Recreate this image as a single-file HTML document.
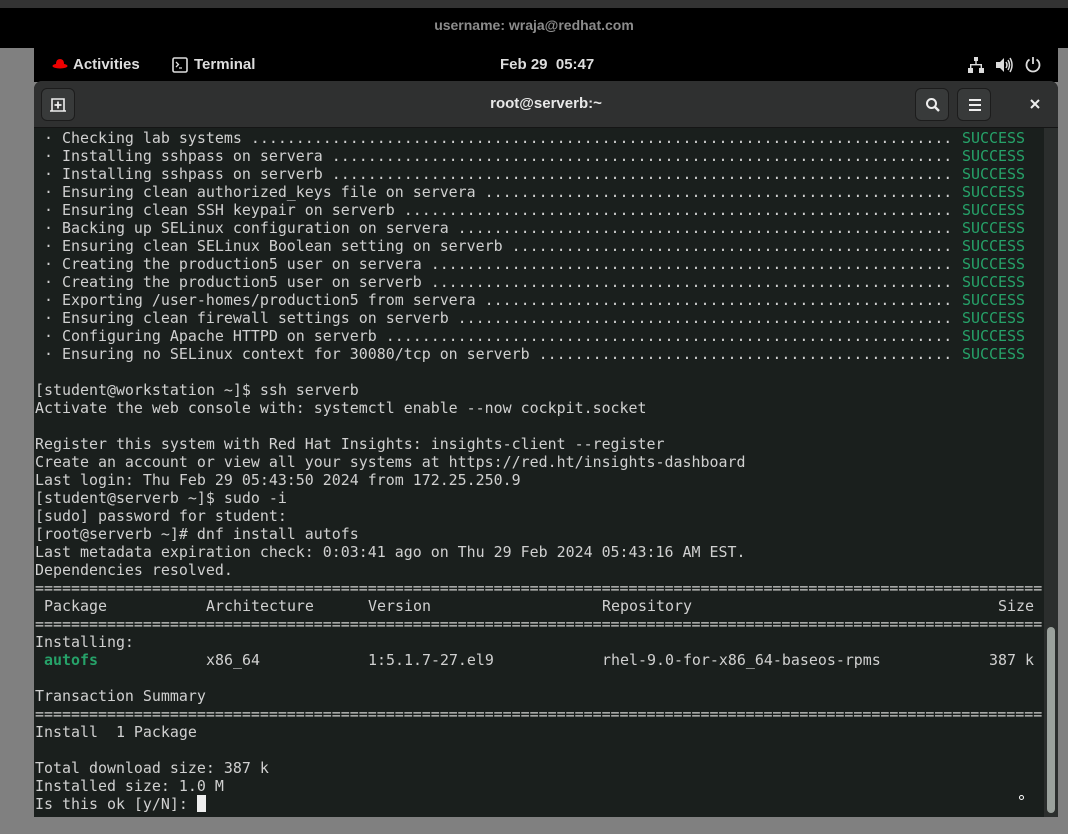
<!DOCTYPE html>
<html><head><meta charset="utf-8"><style>
*{margin:0;padding:0;box-sizing:border-box}
body{width:1068px;height:834px;overflow:hidden;background:#808080;position:relative;font-family:"Liberation Sans",sans-serif}
#top{position:absolute;left:0;top:0;width:1068px;height:48px;background:#000;border-top:8px solid #333}
#top span{position:absolute;left:0;right:0;top:9px;text-align:center;color:#8c8c8c;font-size:14px;font-weight:bold}
#bar{position:absolute;left:34px;top:48px;width:1024px;height:34px;background:#000;color:#ddd;font-size:15px;font-weight:bold}
#win{position:absolute;left:34px;top:81px;width:1024px;height:736px;background:#1a1f1d;border-radius:8px 8px 0 0;overflow:hidden}
#hdr{position:absolute;left:0;top:0;width:1024px;height:47px;background:#2f3030;border-bottom:1px solid #151515}
.btn{position:absolute;top:7px;height:33px;background:#383a3a;border:1px solid #1c1c1c;border-radius:6px}
#term{position:absolute;left:1px;top:48px;font-family:"DejaVu Sans Mono","Liberation Mono",monospace;font-size:14.95px;color:#d0d0d0}
.l{position:relative;height:18px;line-height:18px;white-space:pre}
.d{position:absolute;left:0;top:0;width:918px;overflow:hidden}
.s{position:absolute;left:927px;top:0;color:#26a269}
.a{position:absolute;top:0}
.g{color:#26a269;font-weight:bold}
#sb{position:absolute;left:1010px;top:47px;width:14px;height:689px;background:#2b2e2d}
#th{position:absolute;left:1013px;top:546px;width:8px;height:186px;background:#9aa19c;border-radius:4px}
</style></head><body>
<div id="top"><span>username: wraja@redhat.com</span></div>
<div id="bar">
<svg style="position:absolute;left:18px;top:10px" width="16" height="12" viewBox="0 0 16 12"><path d="M4 6 Q4 1 8 1 Q12 1 12 6 Z" fill="#e00"/><ellipse cx="8" cy="8" rx="7.5" ry="2.5" fill="#e00"/></svg>
<span style="position:absolute;left:39px;top:8px">Activities</span>
<svg style="position:absolute;left:138px;top:9px" width="16" height="16" viewBox="0 0 16 16"><rect x="1" y="1" width="14" height="14" rx="1.5" fill="none" stroke="#ddd" stroke-width="1.6"/><path d="M4 5 L6.5 7.5 L4 10 M7 11 H10" fill="none" stroke="#ddd" stroke-width="1.3"/></svg>
<span style="position:absolute;left:160px;top:8px">Terminal</span>
<span style="position:absolute;left:466px;top:8px">Feb 29&nbsp;&nbsp;05:47</span>
<svg style="position:absolute;left:934px;top:9px" width="16" height="16" viewBox="0 0 16 16" fill="#ddd"><rect x="6" y="0" width="4" height="4"/><rect x="7.3" y="4" width="1.4" height="4"/><rect x="2" y="7" width="12" height="1.4"/><rect x="2" y="7" width="1.4" height="4"/><rect x="12.6" y="7" width="1.4" height="4"/><rect x="0" y="11" width="5" height="5"/><rect x="11" y="11" width="5" height="5"/></svg>
<svg style="position:absolute;left:962px;top:9px" width="17" height="16" viewBox="0 0 17 16"><path d="M0 5 H4 L8 1 V15 L4 11 H0Z" fill="#ddd"/><path d="M10 5 Q12 8 10 11 M12 3 Q15 8 12 13 M14 1 Q18 8 14 15" fill="none" stroke="#ddd" stroke-width="1.5"/></svg>
<svg style="position:absolute;left:991px;top:8px" width="16" height="17" viewBox="0 0 16 17"><path d="M4.5 3.5 A6.5 6.5 0 1 0 11.5 3.5" fill="none" stroke="#ddd" stroke-width="1.8"/><path d="M8 1 V8" stroke="#ddd" stroke-width="1.8"/></svg>
</div>
<div id="win">
<div id="hdr">
<div class="btn" style="left:7px;width:34px"><svg style="position:absolute;left:8px;top:8px" width="16" height="15" viewBox="0 0 16 15"><path d="M2 14 V2 H14 V14 M0 14 H16" fill="none" stroke="#eee" stroke-width="1.6"/><path d="M8 4.5 V11.5 M4.5 8 H11.5" stroke="#eee" stroke-width="1.8"/></svg></div>
<div style="position:absolute;left:0;right:0;top:14px;text-align:center;color:#e8e8e8;font-size:15px;font-weight:bold">root@serverb:~</div>
<div class="btn" style="left:881px;width:34px"><svg style="position:absolute;left:9px;top:8px" width="16" height="16" viewBox="0 0 16 16"><circle cx="6.5" cy="6.5" r="4.5" fill="none" stroke="#eee" stroke-width="2"/><path d="M10 10 L14 14" stroke="#eee" stroke-width="2.4"/></svg></div>
<div class="btn" style="left:923px;width:34px"><svg style="position:absolute;left:11px;top:10px" width="12" height="12" viewBox="0 0 12 12" fill="#eee"><rect y="0" width="12" height="2"/><rect y="5" width="12" height="2"/><rect y="10" width="12" height="2"/></svg></div>
<svg style="position:absolute;left:996px;top:18px" width="10" height="10" viewBox="0 0 10 10"><path d="M1 1 L9 9 M9 1 L1 9" stroke="#eee" stroke-width="2"/></svg>
</div>
<div id="term">
<div class="l"><span class="d"> · Checking lab systems ..........................................................................................................</span><span class="s">SUCCESS</span></div>
<div class="l"><span class="d"> · Installing sshpass on servera ..................................................................................................</span><span class="s">SUCCESS</span></div>
<div class="l"><span class="d"> · Installing sshpass on serverb ..................................................................................................</span><span class="s">SUCCESS</span></div>
<div class="l"><span class="d"> · Ensuring clean authorized_keys file on servera .................................................................................</span><span class="s">SUCCESS</span></div>
<div class="l"><span class="d"> · Ensuring clean SSH keypair on serverb ..........................................................................................</span><span class="s">SUCCESS</span></div>
<div class="l"><span class="d"> · Backing up SELinux configuration on servera ....................................................................................</span><span class="s">SUCCESS</span></div>
<div class="l"><span class="d"> · Ensuring clean SELinux Boolean setting on serverb ..............................................................................</span><span class="s">SUCCESS</span></div>
<div class="l"><span class="d"> · Creating the production5 user on servera .......................................................................................</span><span class="s">SUCCESS</span></div>
<div class="l"><span class="d"> · Creating the production5 user on serverb .......................................................................................</span><span class="s">SUCCESS</span></div>
<div class="l"><span class="d"> · Exporting /user-homes/production5 from servera .................................................................................</span><span class="s">SUCCESS</span></div>
<div class="l"><span class="d"> · Ensuring clean firewall settings on serverb .....................................................................................</span><span class="s">SUCCESS</span></div>
<div class="l"><span class="d"> · Configuring Apache HTTPD on serverb .............................................................................................</span><span class="s">SUCCESS</span></div>
<div class="l"><span class="d"> · Ensuring no SELinux context for 30080/tcp on serverb ...........................................................................</span><span class="s">SUCCESS</span></div>
<div class="l"> </div>
<div class="l">[student@workstation ~]$ ssh serverb</div>
<div class="l">Activate the web console with: systemctl enable --now cockpit.socket</div>
<div class="l"> </div>
<div class="l">Register this system with Red Hat Insights: insights-client --register</div>
<div class="l">Create an account or view all your systems at https://red.ht/insights-dashboard</div>
<div class="l">Last login: Thu Feb 29 05:43:50 2024 from 172.25.250.9</div>
<div class="l">[student@serverb ~]$ sudo -i</div>
<div class="l">[sudo] password for student:</div>
<div class="l">[root@serverb ~]# dnf install autofs</div>
<div class="l">Last metadata expiration check: 0:03:41 ago on Thu 29 Feb 2024 05:43:16 AM EST.</div>
<div class="l">Dependencies resolved.</div>
<div class="l">================================================================================================================</div>
<div class="l"><span class="a" style="left:9px">Package</span><span class="a" style="left:171px">Architecture</span><span class="a" style="left:333px">Version</span><span class="a" style="left:567px">Repository</span><span class="a" style="left:963px">Size</span></div>
<div class="l">================================================================================================================</div>
<div class="l">Installing:</div>
<div class="l"><span class="a g" style="left:9px">autofs</span><span class="a" style="left:171px">x86_64</span><span class="a" style="left:333px">1:5.1.7-27.el9</span><span class="a" style="left:567px">rhel-9.0-for-x86_64-baseos-rpms</span><span class="a" style="left:954px">387 k</span></div>
<div class="l"> </div>
<div class="l">Transaction Summary</div>
<div class="l">================================================================================================================</div>
<div class="l">Install  1 Package</div>
<div class="l"> </div>
<div class="l">Total download size: 387 k</div>
<div class="l">Installed size: 1.0 M</div>
<div class="l">Is this ok [y/N]: <span style="background:#eee;display:inline-block;width:9px;height:17px;vertical-align:-3px"></span></div>
</div>
<div id="sb"></div><div id="th"></div>
<div style="position:absolute;left:985px;top:714px;width:5px;height:5px;border:1px solid #fff;border-radius:50%"></div>
</div>
</body></html>
